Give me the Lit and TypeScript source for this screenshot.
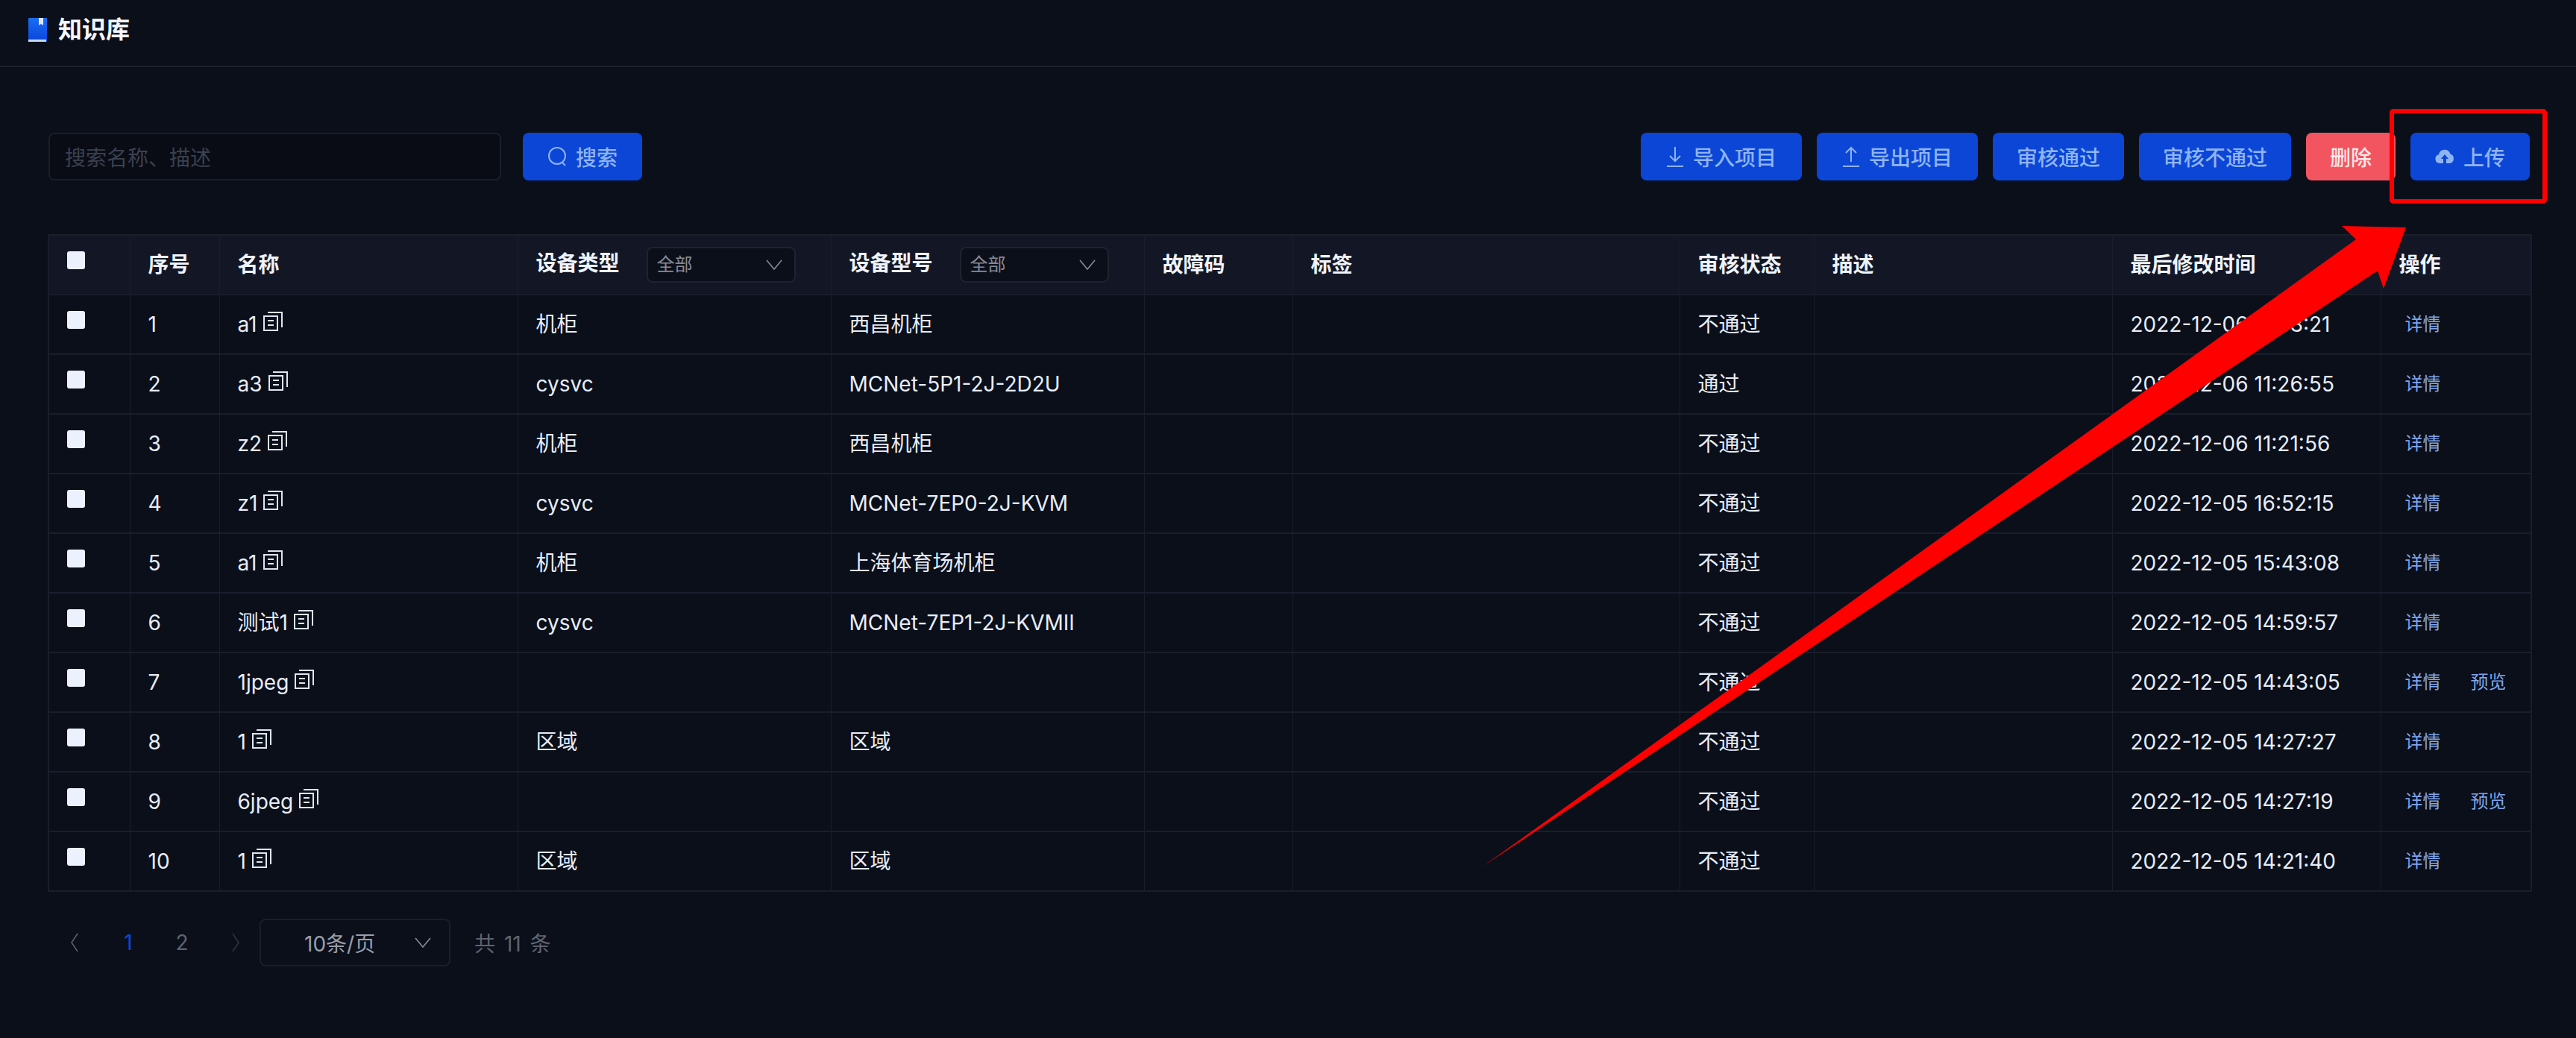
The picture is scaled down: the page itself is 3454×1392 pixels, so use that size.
import { LitElement, html, css, svg } from "lit";
import { customElement } from "lit/decorators.js";

type Row = { n: number; name: string; type: string; model: string; status: string; time: string; preview?: boolean };

const rows: Row[] = [
  { n: 1, name: "a1", type: "机柜", model: "西昌机柜", status: "不通过", time: "2022-12-06 11:33:21" },
  { n: 2, name: "a3", type: "cysvc", model: "MCNet-5P1-2J-2D2U", status: "通过", time: "2022-12-06 11:26:55" },
  { n: 3, name: "z2", type: "机柜", model: "西昌机柜", status: "不通过", time: "2022-12-06 11:21:56" },
  { n: 4, name: "z1", type: "cysvc", model: "MCNet-7EP0-2J-KVM", status: "不通过", time: "2022-12-05 16:52:15" },
  { n: 5, name: "a1", type: "机柜", model: "上海体育场机柜", status: "不通过", time: "2022-12-05 15:43:08" },
  { n: 6, name: "测试1", type: "cysvc", model: "MCNet-7EP1-2J-KVMII", status: "不通过", time: "2022-12-05 14:59:57" },
  { n: 7, name: "1jpeg", type: "", model: "", status: "不通过", time: "2022-12-05 14:43:05", preview: true },
  { n: 8, name: "1", type: "区域", model: "区域", status: "不通过", time: "2022-12-05 14:27:27" },
  { n: 9, name: "6jpeg", type: "", model: "", status: "不通过", time: "2022-12-05 14:27:19", preview: true },
  { n: 10, name: "1", type: "区域", model: "区域", status: "不通过", time: "2022-12-05 14:21:40" },
];

const chevron = html`<svg class="chev" viewBox="0 0 22 14"><path d="M1 1l10 12L21 1" fill="none" stroke="currentColor" stroke-width="1.6"/></svg>`;
const copyIcon = html`<svg class="copy" viewBox="0 0 26 26" fill="none" stroke="currentColor" stroke-width="2"><path d="M1 6h18v19H1z"/><path d="M6 1h19v20"/><path d="M6 12h8M6 18h8"/></svg>`;

@customElement("app-root")
export class AppRoot extends LitElement {
  static styles = css`
    :host {
      display: block;
      width: 3454px;
      height: 1392px;
      position: relative;
      overflow: hidden;
      background: #0b0f1a;
      color: #eaf1fc;
      font-family: Inter, "Noto Sans CJK SC", sans-serif;
      font-size: 28px;
    }
    .top {
      height: 88px;
      box-sizing: border-box;
      border-bottom: 2px solid #1c202c;
      display: flex;
      align-items: center;
      padding-left: 38px;
      gap: 14px;
      padding-bottom: 8px;
      height: 90px;
    }
    .top svg { width: 26px; height: 32px; display: block; }
    .top h1 { margin: 0; font-size: 32px; font-weight: 700; line-height: 40px; color: #f4f7fd; }
    .tools {
      display: flex;
      justify-content: space-between;
      align-items: center;
      padding: 88px 62px 0 65px;
      height: 64px;
    }
    .left, .right { display: flex; gap: 20px; align-items: center; }
    .left { gap: 29px; }
    .search {
      width: 607px;
      height: 64px;
      box-sizing: border-box;
      border: 2px solid #1a1e2b;
      border-radius: 8px;
      background: #090c15;
      color: #3c404e;
      display: flex;
      align-items: center;
      padding-left: 20px;
    }
    .btn {
      height: 64px;
      box-sizing: border-box;
      border-radius: 8px;
      background: #0b46d6;
      color: #8fb4f4;
      display: flex;
      align-items: center;
      justify-content: center;
      gap: 12px;
      font-weight: 500;
    }
    .btn svg { display: block; }
    .w160 { width: 160px; }
    .w216 { width: 216px; }
    .w176 { width: 176px; }
    .w204 { width: 204px; }
    .danger { width: 120px; background: #f25560; color: #ffe9ea; }
    table {
      margin: 72px 0 0 64px;
      width: 3329px;
      border-collapse: collapse;
      table-layout: fixed;
      border: 2px solid #1a1e2b;
    }
    th, td {
      height: 80px;
      box-sizing: border-box;
      padding: 0 0 0 24px;
      text-align: left;
      vertical-align: middle;
      white-space: nowrap;
      border: 2px solid #1a1e2b;
      font-weight: 400;
      line-height: 36px;
    }
    th { background: #131725; font-weight: 600; color: #eef3fc; }
    td { border-left-width: 1px; border-right-width: 1px; color: #e6edf9; }
    th { border-left-width: 1px; border-right-width: 1px; }
    .box {
      display: block;
      width: 24px;
      height: 24px;
      border-radius: 3px;
      background: #ebf2fd;
      margin: -12px 0 0 0;
    }
    .name { display: flex; align-items: center; gap: 8px; }
    .copy { width: 26px; height: 26px; color: #dde5f2; margin-top: -8px; flex: none; }
    .filter { display: flex; align-items: center; gap: 36px; }
    .filter > span:first-child { margin-top: -4px; }
    .sel {
      width: 200px;
      height: 48px;
      box-sizing: border-box;
      border: 2px solid #1f2330;
      border-radius: 8px;
      background: #0b0f1a;
      display: flex;
      justify-content: space-between;
      align-items: center;
      padding: 0 16px 0 12px;
      font-size: 24px;
      font-weight: 400;
      color: #878b97;
    }
    .chev { width: 22px; height: 14px; display: block; color: #878b97; }
    .ops { display: flex; gap: 40px; font-size: 24px; color: #7ea6ec; padding-left: 8px; }
    .pager {
      display: flex;
      align-items: center;
      margin: 36px 0 0 64px;
      height: 64px;
      color: #5f6370;
    }
    .pg { width: 72px; display: flex; justify-content: center; }
    .pg svg { width: 12px; height: 30px; display: block; }
    .cur { color: #0b46d6; }
    .size {
      width: 256px;
      height: 64px;
      box-sizing: border-box;
      border: 2px solid #1a1e2b;
      border-radius: 8px;
      display: flex;
      align-items: center;
      justify-content: space-between;
      padding: 0 24px 0 58px;
      margin-left: -4px;
      color: #9a9eaa;
    }
    .total { margin-left: 32px; word-spacing: 4px; }
    .overlay {
      position: absolute;
      left: 0;
      top: 0;
      width: 3454px;
      height: 1392px;
      pointer-events: none;
    }
  `;

  private head() {
    return html`<tr>
      <th><i class="box"></i></th>
      <th>序号</th>
      <th>名称</th>
      <th><div class="filter"><span>设备类型</span><div class="sel">全部${chevron}</div></div></th>
      <th><div class="filter"><span>设备型号</span><div class="sel">全部${chevron}</div></div></th>
      <th>故障码</th>
      <th>标签</th>
      <th>审核状态</th>
      <th>描述</th>
      <th>最后修改时间</th>
      <th>操作</th>
    </tr>`;
  }

  private row(r: Row) {
    return html`<tr>
      <td><i class="box"></i></td>
      <td>${r.n}</td>
      <td><div class="name"><span>${r.name}</span>${copyIcon}</div></td>
      <td>${r.type}</td>
      <td>${r.model}</td>
      <td></td>
      <td></td>
      <td>${r.status}</td>
      <td></td>
      <td>${r.time}</td>
      <td><div class="ops"><span>详情</span>${r.preview ? html`<span>预览</span>` : ""}</div></td>
    </tr>`;
  }

  render() {
    const widths = [109, 120, 400, 420, 420, 199, 519, 180, 400, 360, 202];
    return html`
      <header class="top">
        <svg viewBox="0 0 26 32">
          <defs><linearGradient id="bk" x1="0" y1="0" x2="0" y2="1"><stop offset="0" stop-color="#1a6cf5"/><stop offset="1" stop-color="#0a44dc"/></linearGradient></defs>
          <path d="M1 0h24v32H1a1 1 0 0 1-1-1V1a1 1 0 0 1 1-1z" fill="url(#bk)"/>
          <rect y="29" width="24" height="3" fill="#c9dcfb"/>
          <path d="M14 0h6v10l-3-2-3 2z" fill="#dfe9fb"/>
        </svg>
        <h1>知识库</h1>
      </header>
      <section class="tools">
        <div class="left">
          <div class="search">搜索名称、描述</div>
          <div class="btn w160">
            <svg width="26" height="30" viewBox="0 0 26 30" fill="none" stroke="currentColor" stroke-width="2"><circle cx="13" cy="14" r="11"/><path d="M20 23l4 4"/></svg>
            搜索
          </div>
        </div>
        <div class="right">
          <div class="btn w216">
            <svg width="24" height="30" viewBox="0 0 24 30" fill="none" stroke="currentColor" stroke-width="2"><path d="M12 2v18M5 14l7 7 7-7M1 28h22"/></svg>
            导入项目
          </div>
          <div class="btn w216">
            <svg width="24" height="30" viewBox="0 0 24 30" fill="none" stroke="currentColor" stroke-width="2"><path d="M12 22V4M5 10l7-7 7 7M1 28h22"/></svg>
            导出项目
          </div>
          <div class="btn w176">审核通过</div>
          <div class="btn w204">审核不通过</div>
          <div class="btn danger">删除</div>
          <div class="btn w160">
            <svg width="26" height="20" viewBox="0 0 26 20"><path fill="currentColor" d="M6 19a6 6 0 0 1-1-11.8A8 8 0 0 1 20.500 6.500 6.500 6.500 0 0 1 20 19h-5v-6h3l-5-6-5 6h3v6z"/></svg>
            上传
          </div>
        </div>
      </section>
      <table>
        <colgroup>${widths.map((w) => html`<col style="width:${w}px" />`)}</colgroup>
        <thead>${this.head()}</thead>
        <tbody>${rows.map((r) => this.row(r))}</tbody>
      </table>
      <nav class="pager">
        <span class="pg"><svg viewBox="0 0 12 30" fill="none" stroke="#5f6370" stroke-width="1.5"><path d="M10 3L2 15l8 12"/></svg></span>
        <span class="pg cur">1</span>
        <span class="pg">2</span>
        <span class="pg"><svg viewBox="0 0 12 30" fill="none" stroke="#30343f" stroke-width="1.5"><path d="M2 3l8 12-8 12"/></svg></span>
        <div class="size"><span>10条/页</span>${chevron}</div>
        <span class="total">共 11 条</span>
      </nav>
      <svg class="overlay" viewBox="0 0 3454 1392">
        ${svg`<rect x="3207" y="149" width="205" height="121" rx="2" fill="none" stroke="#f00" stroke-width="6"/>
        <path d="M1988 1162 L3159 321 L3140 303 L3226 305 L3196 387 L3188 363 Z" fill="#f00"/>`}
      </svg>
    `;
  }
}
